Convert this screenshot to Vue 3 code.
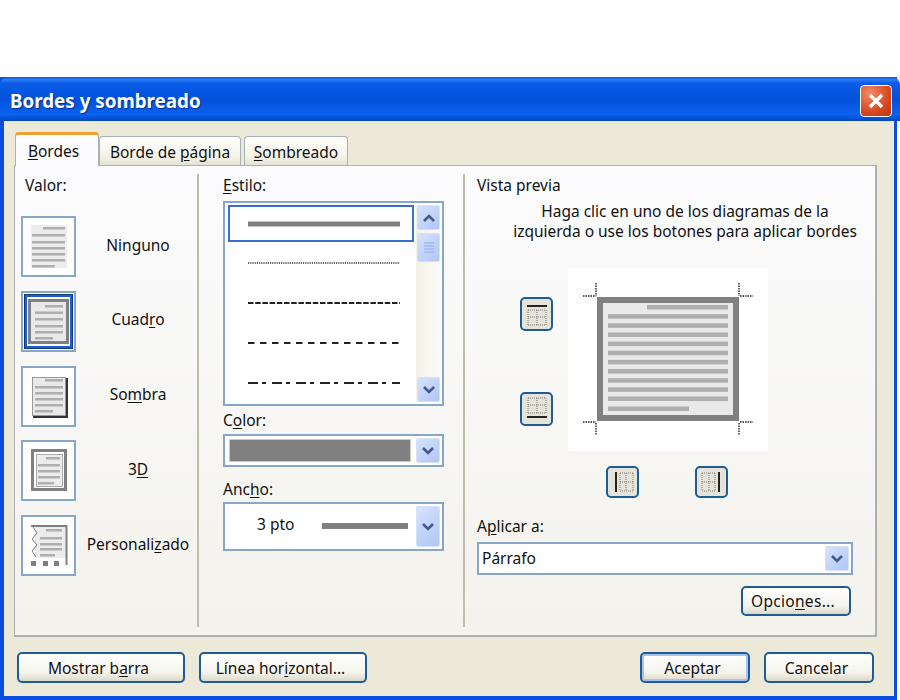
<template>
  <div class="window">
    <header class="titlebar">
      <span class="title">Bordes y sombreado</span>
      <button class="close" aria-label="Cerrar">
        <svg width="20" height="20" viewBox="0 0 20 20">
          <path d="M4 4 L16 16 M16 4 L4 16" stroke="#fff" stroke-width="3.4" fill="none" />
        </svg>
      </button>
    </header>

    <div class="body">
      <div class="tabs">
        <div class="tab active"><u>B</u>ordes</div>
        <div class="tab pagina">Borde de <u>p</u>ágina</div>
        <div class="tab sombreado"><u>S</u>ombreado</div>
      </div>

      <div class="panel">
        <!-- Valor -->
        <section class="col col-valor">
          <div class="label valor-label">Valor:</div>
          <div class="valor-list">
            <div v-for="v in valores" :key="v.kind" class="valor-row">
              <div class="thumb">
                <svg width="49" height="55" viewBox="0 0 49 55">
                  <g v-if="v.kind === 'box'">
                    <rect x="1.5" y="1.5" width="46" height="52" fill="none" stroke="#1d5fd0" stroke-width="3" />
                    <rect x="0.5" y="0.5" width="48" height="54" fill="none" stroke="#111" stroke-dasharray="1 1" />
                    <rect x="5.5" y="6.5" width="38" height="42" fill="#e9e9e9" stroke="#808080" stroke-width="3" />
                  </g>
                  <rect v-if="v.kind === 'none'" x="7" y="6" width="36" height="43" fill="#ececec" />
                  <g v-if="v.kind === 'shadow'">
                    <rect x="8.5" y="8.5" width="33" height="38" fill="#e9e9e9" stroke="#999" />
                    <path d="M43 9 V48 H9" fill="none" stroke="#333" stroke-width="2" />
                  </g>
                  <g v-if="v.kind === '3d'">
                    <rect x="8.5" y="7.5" width="33" height="39" fill="#fff" stroke="#808080" stroke-width="3" />
                    <rect x="12.5" y="11.5" width="26" height="32" fill="#ececec" stroke="#aaa" />
                  </g>
                  <g v-if="v.kind === 'custom'">
                    <rect x="11" y="8" width="31" height="32" fill="#ececec" />
                    <path d="M7 8 H42.5 V47" fill="none" stroke="#808080" stroke-width="2" />
                    <path d="M9 9 L13 15 L8 21 L13 27 L8 33 L12 39" fill="none" stroke="#808080" />
                    <path d="M7 43h5v5h-5zM19 43h5v5h-5zM30 43h5v5h-5z" fill="#808080" />
                  </g>
                  <g fill="#aeaeae">
                    <rect v-for="(l, i) in v.lines" :key="i" :x="l.x" :y="l.y" :width="l.w" height="2.5" />
                  </g>
                </svg>
              </div>
              <div class="valor-name">{{ v.pre }}<u>{{ v.key }}</u>{{ v.post }}</div>
            </div>
          </div>
        </section>

        <!-- Estilo -->
        <section class="col col-estilo">
          <div class="label"><u>E</u>stilo:</div>
          <div class="listbox">
            <div class="list-items">
              <div v-for="(s, i) in estilos" :key="i" class="list-item" :class="{ selected: i === 0 }">
                <svg width="152" height="6" viewBox="0 0 152 6">
                  <line x1="0" y1="3" x2="152" y2="3" :stroke="s.color" :stroke-width="s.width" :stroke-dasharray="s.dash" />
                </svg>
              </div>
            </div>
            <div class="scrollbar">
              <div class="sb-btn">
                <svg width="14" height="10" viewBox="0 0 14 10"><path d="M2 8 L7 3 L12 8" fill="none" stroke="#3f5a8c" stroke-width="2.6" /></svg>
              </div>
              <div class="sb-thumb">
                <svg width="10" height="11" viewBox="0 0 10 11"><path d="M0 1h10M0 4h10M0 7h10M0 10h10" stroke="#8aaaf0" /></svg>
              </div>
              <div class="sb-track"></div>
              <div class="sb-btn">
                <svg width="14" height="10" viewBox="0 0 14 10"><path d="M2 2 L7 7 L12 2" fill="none" stroke="#3f5a8c" stroke-width="2.6" /></svg>
              </div>
            </div>
          </div>

          <div class="label color-label">C<u>o</u>lor:</div>
          <div class="combo combo-color">
            <div class="swatch"></div>
            <div class="drop">
              <svg width="14" height="10" viewBox="0 0 14 10"><path d="M2 2 L7 7 L12 2" fill="none" stroke="#3f5a8c" stroke-width="2.6" /></svg>
            </div>
          </div>

          <div class="label ancho-label">Anc<u>h</u>o:</div>
          <div class="combo combo-ancho">
            <div class="ancho-value">3 pto</div>
            <div class="ancho-line"></div>
            <div class="drop">
              <svg width="14" height="10" viewBox="0 0 14 10"><path d="M2 2 L7 7 L12 2" fill="none" stroke="#3f5a8c" stroke-width="2.6" /></svg>
            </div>
          </div>
        </section>

        <!-- Vista previa -->
        <section class="col col-preview">
          <div class="label">Vista previa</div>
          <p class="hint">Haga clic en uno de los diagramas de la<br />izquierda o use los botones para aplicar bordes</p>

          <div class="preview-grid">
            <div class="side-btns">
              <button class="edge-btn"><svg width="24" height="26" viewBox="0 0 24 26"><path d="M2 5 H22" stroke="#222" stroke-width="2" /><path d="M3 9v15M12 9v15M21 9v15M3 9h18M3 16h18M3 24h18" stroke="#777" stroke-dasharray="1 1" fill="none" /></svg></button>
              <button class="edge-btn"><svg width="24" height="26" viewBox="0 0 24 26"><path d="M2 21 H22" stroke="#222" stroke-width="2" /><path d="M3 2v15M12 2v15M21 2v15M3 2h18M3 9h18M3 17h18" stroke="#777" stroke-dasharray="1 1" fill="none" /></svg></button>
            </div>

            <div class="canvas">
              <svg width="200" height="183" viewBox="0 0 200 183">
                <path d="M28 15 V28 M15 28 H28 M171 15 V28 M172 28 H185 M15 154 H28 M28 155 V167 M172 154 H185 M171 155 V167" stroke="#222" stroke-width="1.4" stroke-dasharray="1.5 1" fill="none" />
                <rect x="29" y="29" width="142" height="124" fill="#808080" />
                <rect x="35" y="35" width="130" height="112" fill="#e9e9e9" />
                <g fill="#aeaeae">
                  <rect x="79" y="37" width="81" height="4.5" />
                  <rect v-for="n in 10" :key="n" x="40" :y="37 + n * 9.15" width="120" height="4.5" />
                  <rect x="40" y="138.5" width="81" height="4.5" />
                </g>
              </svg>
            </div>

            <div class="bottom-btns">
              <button class="edge-btn"><svg width="24" height="24" viewBox="0 0 24 24"><path d="M5 2 V22" stroke="#222" stroke-width="2" /><path d="M9 3h13M9 12h13M9 21h13M9 3v18M15 3v18M22 3v18" stroke="#777" stroke-dasharray="1 1" fill="none" /></svg></button>
              <button class="edge-btn"><svg width="24" height="24" viewBox="0 0 24 24"><path d="M19 2 V22" stroke="#222" stroke-width="2" /><path d="M2 3h13M2 12h13M2 21h13M2 3v18M9 3v18M15 3v18" stroke="#777" stroke-dasharray="1 1" fill="none" /></svg></button>
            </div>
          </div>

          <div class="label aplicar-label">A<u>p</u>licar a:</div>
          <div class="combo combo-aplicar">
            <div class="aplicar-value">Párrafo</div>
            <div class="drop">
              <svg width="14" height="10" viewBox="0 0 14 10"><path d="M2 2 L7 7 L12 2" fill="none" stroke="#3f5a8c" stroke-width="2.6" /></svg>
            </div>
          </div>
          <div class="opciones-row">
            <button class="btn small opciones">Opcio<u>n</u>es...</button>
          </div>
        </section>
      </div>

      <footer class="footer">
        <button class="btn wide">Mostrar b<u>a</u>rra</button>
        <button class="btn wide">Línea hor<u>i</u>zontal...</button>
        <div class="spacer"></div>
        <button class="btn small default">Aceptar</button>
        <button class="btn small">Cancelar</button>
      </footer>
    </div>
  </div>
</template>

<script setup>
// text lines inside each little page, in the 49x55 space of the thumb
function lines(x, w, ys, topX, lastW) {
  return ys.map((y, i) => {
    if (i === 0) return { x: topX, y, w: x + w - topX }
    if (i === ys.length - 1) return { x, y, w: lastW }
    return { x, y, w }
  })
}

const valores = [
  { kind: 'none', pre: 'Ninguno', key: '', post: '', lines: lines(8, 33, [8, 15, 22, 28, 34, 40, 46], 19, 23) },
  { kind: 'box', pre: 'Cuad', key: 'r', post: 'o', lines: lines(11, 28, [11, 17.5, 24, 31, 37, 43], 21, 18) },
  { kind: 'shadow', pre: 'So', key: 'm', post: 'bra', lines: lines(11, 28, [10, 17, 23, 29, 35, 41], 21, 18) },
  { kind: '3d', pre: '3', key: 'D', post: '', lines: lines(14, 22, [14, 21, 27, 33, 39], 22, 16) },
  { kind: 'custom', pre: 'Personali', key: 'z', post: 'ado', lines: lines(16, 22, [11, 19, 25, 30, 36], 22, 15) }
]

const estilos = [
  { color: '#808080', width: 5, dash: 'none' },
  { color: '#333', width: 1.6, dash: '1.2 1' },
  { color: '#222', width: 2, dash: '5.5 1.7' },
  { color: '#222', width: 2, dash: '6.5 5.5' },
  { color: '#222', width: 2, dash: '10 4 4 6' }
]
</script>

<style scoped>
.window {
  width: 897px;
  height: 623px;
  margin-top: 77px;
  display: flex;
  flex-direction: column;
  font-family: "Noto Sans", "Open Sans", sans-serif;
  font-size: 15.5px;
  color: #111;
  background: #0a4ee0;
}

.titlebar {
  height: 44px;
  width: 900px;
  flex: none;
  display: flex;
  align-items: center;
  justify-content: space-between;
  padding: 4px 8px 0 10px;
  box-sizing: border-box;
  border-radius: 8px 8px 0 0;
  background: linear-gradient(#0a56e0 0%, #2a7cf4 6%, #0a5ce6 14%, #0351dc 50%, #0a62ee 85%, #0345c4 100%);
}

.title {
  color: #fff;
  font-weight: 700;
  font-size: 18.8px;
  text-shadow: 1px 1px 1px #0a2f90;
}

.close {
  width: 32px;
  height: 32px;
  padding: 0;
  border: 1px solid #fff;
  border-radius: 4px;
  background: radial-gradient(circle at 30% 25%, #f08a68, #d9481f 60%, #b93414);
  display: flex;
  align-items: center;
  justify-content: center;
}

.body {
  flex: 1;
  min-height: 0;
  margin: 0 3px 4px 4px;
  padding: 11px 17px 0 10px;
  background: #ece9d8;
  display: flex;
  flex-direction: column;
}

.tabs {
  display: flex;
  align-items: flex-end;
  height: 33px;
  padding-left: 1px;
  position: relative;
  z-index: 1;
}

.tab {
  height: 29px;
  box-sizing: border-box;
  padding: 4px 0 0;
  text-align: center;
  background: linear-gradient(#fff, #f4f2e8 70%, #e4e1d2);
  border: 1px solid #a9b1b4;
  border-bottom: none;
  border-radius: 4px 4px 0 0;
}

.tab.active {
  width: 84px;
  height: 34px;
  margin-bottom: -1px;
  padding: 5px 7px 0 0;
  background: #fcfcfe;
  border-top: 3px solid #f0a030;
}

.tab.pagina {
  width: 142px;
}

.tab.sombreado {
  width: 104px;
  margin-left: 3px;
}

.panel {
  height: 469px;
  flex: none;
  display: flex;
  border: 1px solid #a9b1b4;
  border-right-width: 2px;
  border-bottom-width: 2px;
  background: linear-gradient(#fcfcfe, #f3f2ec);
}

.col {
  display: flex;
  flex-direction: column;
  box-sizing: border-box;
  margin: 8px 0;
}

.label {
  line-height: 22px;
  height: 22px;
}

.col-valor {
  width: 184px;
  padding-left: 6px;
  border-right: 2px solid #bdbcae;
}

.valor-label {
  padding-left: 4px;
}

.valor-list {
  margin-top: 20px;
  display: flex;
  flex-direction: column;
  gap: 13.75px;
}

.valor-row {
  display: flex;
  align-items: center;
}

.thumb {
  width: 55px;
  height: 61px;
  box-sizing: border-box;
  border: 2px solid #88a6c8;
  background: #fff;
  flex: none;
}

.thumb svg {
  display: block;
  margin: 1px;
}

.valor-name {
  width: 124px;
  box-sizing: border-box;
  padding: 0 0 4px 3px;
  text-align: center;
}

.col-estilo {
  width: 266px;
  padding-left: 24px;
  border-right: 2px solid #bdbcae;
}

.listbox {
  width: 221px;
  height: 205px;
  margin-top: 5px;
  box-sizing: border-box;
  border: 2px solid #88a6c8;
  background: #fff;
  display: flex;
  padding: 2px 1px 2px 3px;
}

.list-items {
  width: 186px;
  flex: none;
  display: flex;
  flex-direction: column;
}

.list-item {
  height: 40px;
  flex: none;
  box-sizing: border-box;
  padding-left: 20px;
  display: flex;
  align-items: center;
}

.list-item.selected {
  height: 37px;
  margin-bottom: 1px;
  border: 2px solid #3a6fd0;
  padding-left: 18px;
}

.scrollbar {
  width: 26px;
  margin-left: 2px;
  padding: 0 1px;
  box-sizing: border-box;
  display: flex;
  flex-direction: column;
  gap: 3px;
  background: linear-gradient(90deg, #f3f1e6, #fcfbf7);
}

.sb-btn,
.sb-thumb,
.drop {
  display: flex;
  align-items: center;
  justify-content: center;
  border-radius: 2px;
  background: linear-gradient(135deg, #d6e2fd, #b0c6f6);
  border: 1px solid #d6e0f8;
}

.sb-btn {
  height: 23px;
  flex: none;
}

.sb-thumb {
  height: 27px;
  flex: none;
}

.sb-track {
  flex: 1;
}

.color-label {
  margin-top: 3px;
}

.combo {
  box-sizing: border-box;
  border: 2px solid #88a6c8;
  background: #fff;
  display: flex;
  align-items: stretch;
  padding: 2px;
}

.combo-color {
  width: 221px;
  height: 33px;
  margin-top: 3px;
}

.swatch {
  flex: 1;
  margin: 1px 5px 1px 2px;
  background: #808080;
  border: 1px solid #cfcdb8;
}

.drop {
  width: 22px;
  flex: none;
}

.ancho-label {
  margin-top: 11px;
}

.combo-ancho {
  width: 221px;
  height: 49px;
  margin-top: 2px;
}

.ancho-value {
  width: 65px;
  margin-left: 30px;
  line-height: 36px;
  flex: none;
}

.ancho-line {
  width: 86px;
  height: 6px;
  align-self: center;
  background: #808080;
  margin-bottom: 1px;
  flex: none;
}

.combo-ancho .drop {
  margin-left: auto;
}

.col-preview {
  flex: 1;
  padding-left: 12px;
}

.hint {
  margin: 5px 0 0;
  padding-left: 18px;
  text-align: center;
  line-height: 20px;
}

.preview-grid {
  margin-top: 27px;
  display: grid;
  grid-template-columns: 33px 200px;
  grid-template-rows: 183px 32px;
  column-gap: 15px;
  row-gap: 15px;
  padding-left: 43px;
}

.side-btns {
  display: flex;
  flex-direction: column;
  gap: 61px;
  padding-top: 29px;
}

.canvas {
  background: #fff;
}

.canvas svg {
  display: block;
}

.bottom-btns {
  grid-column: 2;
  display: flex;
  gap: 56px;
  padding-left: 38px;
}

.edge-btn {
  width: 33px;
  height: 34px;
  padding: 0;
  border: 2px solid #1f5c96;
  border-radius: 5px;
  background: #e6e4d8;
  display: flex;
  align-items: center;
  justify-content: center;
}

.bottom-btns .edge-btn {
  height: 32px;
}

.aplicar-label {
  margin-top: 17px;
}

.combo-aplicar {
  width: 376px;
  height: 33px;
  margin-top: 5px;
}

.aplicar-value {
  flex: 1;
  padding-left: 1px;
  line-height: 25px;
}

.opciones-row {
  width: 374px;
  margin-top: 11px;
  display: flex;
  justify-content: flex-end;
}

.footer {
  margin-top: 15px;
  padding: 0 3px;
  display: flex;
  gap: 14px;
}

.spacer {
  flex: 1;
}

.btn {
  height: 31px;
  padding: 0 5px 0 0;
  font: inherit;
  color: #111;
  border: 2px solid #1f5c96;
  border-radius: 5px;
  background: linear-gradient(#fff, #f4f3ec 70%, #dcd8c8);
}

.btn.wide {
  width: 168px;
}

.btn.small {
  width: 110px;
}

.btn.opciones {
  height: 30px;
  padding-right: 6px;
  letter-spacing: 0.3px;
}

.btn.default {
  box-shadow: inset 0 0 0 2px #a8c4ee;
}

u {
  text-underline-offset: 2px;
}
</style>

<style>
html,
body {
  background: #fff;
}
</style>
